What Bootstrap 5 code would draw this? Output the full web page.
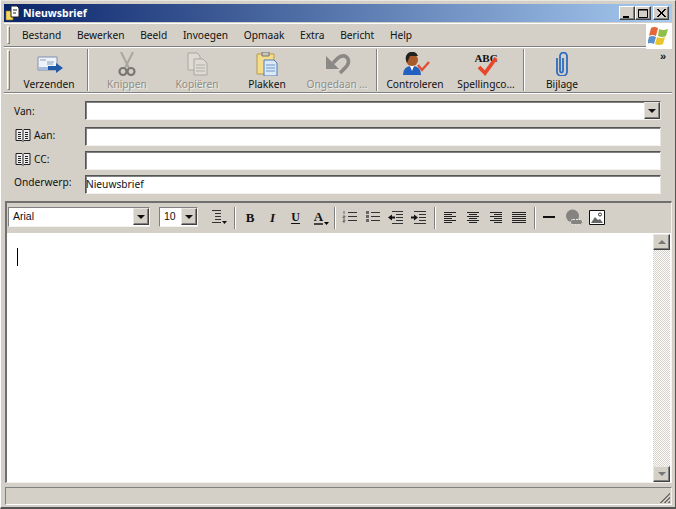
<!DOCTYPE html>
<html lang="nl"><head><meta charset="utf-8"><title>Nieuwsbrief</title>
<link href="https://cdn.jsdelivr.net/npm/bootstrap@5.3.0/dist/css/bootstrap.min.css" rel="stylesheet">
<style>
html,body{margin:0;height:509px;width:676px;overflow:hidden;background:#d4d0c8}
body,.win{font:10.2px/13px "Noto Sans","Liberation Sans",sans-serif;color:#111}
.win{width:676px;height:509px;background:#d4d0c8;border-top:1px solid #e8e6e0;border-left:1px solid #fff;border-right:1px solid #555;border-bottom:2px solid #555;padding:3px 3px 2px 3px}
.ttl{height:18px;flex:none;background:linear-gradient(90deg,#0a246a,#a6caf0);color:#fff;font:bold 10.5px/18px "Noto Sans",sans-serif;padding-left:1px}
.ttl-ico{margin-right:2px}
.wbtn{width:16px;height:14px;background:#d4d0c8;border:1px solid;border-color:#fff #404040 #404040 #fff;box-shadow:inset -1px -1px #808080}
.wbtn svg{display:block;margin:1px}
.wbtn.xb{margin-left:2px}
.ttl-r{margin-right:3px}
.mbar{height:24px;flex:none;border-top:1px solid #fff;margin-top:1px;border-bottom:1px solid #808080;position:relative}
.grip{width:3px;border:1px solid;border-color:#fff #808080 #808080 #fff;margin:2px 0 2px 3px;flex:none}
.grip-t{margin-right:4px}
.mitem{margin-right:15.7px}
.mlist{padding-left:12px}
.flag{width:26px;height:26px;background:#fff;margin-left:auto;margin-top:-1px;display:flex;align-items:center;justify-content:center;margin-bottom:-2px;position:relative}
.tbar{height:46px;flex:none;border-top:1px solid #fff;border-bottom:1px solid #808080;box-shadow:0 1px #fff;position:relative}
.tb{width:70px;flex:none;text-align:center;display:flex;flex-direction:column;align-items:center}
.tb-s{margin-left:1px}
.tb svg{height:24px;width:30px;margin-top:4px;display:block}
.tb span{margin-top:2px;white-space:nowrap;color:#111}
.tb.dis span{color:#8f8c86;text-shadow:1px 1px 0 #f0eee8}
.vsep{width:2px;flex:none;border-left:1px solid #808080;border-right:1px solid #fff;margin:1px 0}
.vs1{margin-left:3px;margin-right:3px}
.vs2{margin-left:4px;margin-right:2px}
.vs3{margin-left:2px;margin-right:2px}
.more{position:absolute;right:7px;top:2px;font:bold 11px/12px "Liberation Sans",sans-serif;letter-spacing:-1px}
.frm{flex:none;padding:8px 11px 0 10px;height:112px}
.frow{height:24px;display:flex;align-items:flex-start}
.frow-t{height:26px}
.flab{width:71px;flex:none;padding-top:1px;white-space:nowrap;display:flex;align-items:center}
.flab-t{padding-top:4px}
.flab svg{margin:0 3px 0 1px}
.inp{flex:1;height:19px;background:#fff;border:1px solid;border-color:#555 #e8e6e0 #f4f3ef #555;box-shadow:inset 1px 1px #808080;line-height:17px;padding-left:0;position:relative}
.arr{position:absolute;right:0;top:0;width:16px;height:17px;background:#d4d0c8;border:1px solid;border-color:#e8e6e0 #404040 #404040 #e8e6e0;box-shadow:inset -1px -1px #808080;display:flex;align-items:center;justify-content:center}
.tri{width:0;height:0;border:4px solid transparent;border-top:4px solid #111;border-bottom:0}
.edwrap{flex:1;min-height:0;margin:-4px 0 0 1px;border:1px solid;border-color:#707070 #f4f3ef #f4f3ef #707070;border-top-width:2px;border-left-width:2px;display:flex;flex-direction:column}
.ftb{height:30px;flex:none;padding:4px 0 0 1px;display:flex;align-items:flex-start}
.sel{height:20px;background:#fff;border:1px solid;border-color:#808080 #f4f3ef #f4f3ef #808080;position:relative;padding-left:4px;line-height:17px;flex:none;font-family:"Liberation Sans",sans-serif;font-size:10.5px}
.sel-a{width:142px}
.sel-b{width:39px;margin:0 9px}
.fi{width:23px;height:20px;flex:none;display:flex;align-items:center;justify-content:center;position:relative}
.fi svg{display:block}
.fi-b{width:22px;font:bold 13px/1 "Liberation Serif",serif}
.fi-i{font:italic bold 13px/1 "Liberation Serif",serif}
.fi-u{font:bold 12px/1 "Liberation Serif",serif;border-bottom:1px solid #111}
.fi-a{font:bold 13px/1 "Liberation Serif",serif;border-bottom:2px solid #444}
.fi-d{position:absolute;right:1px;bottom:2px}
.fi-h{margin-right:4px}
.fs{width:2px;height:22px;flex:none;border-left:1px solid #808080;border-right:1px solid #fff;margin:0 3px 0 4px}
.fs-n{margin-right:2px}
.edit{flex:1;min-height:0;background:#fff;display:flex;border-top:1px solid #fff}
.caret{width:1px;height:18px;background:#000;margin:14px 0 0 10px}
.sb{width:17px;margin-left:auto;margin-right:1px;display:flex;flex-direction:column;background-image:repeating-conic-gradient(#d4d0c8 0 25%,#fff 0 50%);background-size:2px 2px}
.sbtn{height:16px;flex:none;background:#d4d0c8;border:1px solid;border-color:#e8e6e0 #404040 #404040 #e8e6e0;box-shadow:inset -1px -1px #808080;display:flex;align-items:center;justify-content:center}
.tup{width:0;height:0;border:4px solid transparent;border-bottom:4px solid #777;border-top:0}
.tdn{width:0;height:0;border:4px solid transparent;border-top:4px solid #777;border-bottom:0}
.stat{height:18px;flex:none;margin:4px 0 0 1px;border:1px solid;border-color:#808080 #f4f3ef #fff #808080;position:relative}
.grp{position:absolute;right:0;bottom:0}
</style></head><body>
<svg width="0" height="0" class="position-absolute"><defs><symbol id="book" viewBox="0 0 16 14"><path d="M1 1.500h6l1 1 1-1h6v11H9l-1 1-1-1H1z" fill="#eee" stroke="#222"/><path d="M8 2.500v10M3 4.500h3M3 6.500h3M3 8.500h3M3 10.500h3M10 4.500h3M10 6.500h3M10 8.500h3M10 10.500h3" stroke="#222"/></symbol></defs></svg>
<div class="win d-flex flex-column">
 <div class="ttl d-flex align-items-center">
  <svg class="ttl-ico" width="16" height="16" viewBox="0 0 16 16"><path d="M1 6h7v9H1z" fill="#f6d75e" stroke="#8a7020" stroke-width=".6"/><path d="M6 1h6l2 2v9H6z" fill="#fff" stroke="#222"/><path d="M8 5h4M8 8h3" stroke="#222"/></svg>
  <span>Nieuwsbrief</span>
  <div class="ms-auto d-flex ttl-r">
   <div class="wbtn"><svg width="12" height="10"><path d="M2 8h6v2H2z" fill="#000"/></svg></div>
   <div class="wbtn"><svg width="12" height="10"><path d="M1.500 1.500h9v8h-9zM1 2h10" fill="none" stroke="#000"/></svg></div>
   <div class="wbtn xb"><svg width="12" height="10"><path d="M2 1l8 8M3 1l8 8M10 1l-8 8M11 1l-8 8" stroke="#000"/></svg></div>
  </div>
 </div>
 <div class="mbar d-flex">
  <div class="grip"></div>
  <div class="d-flex align-items-center mlist">
   <span class="mitem">Bestand</span><span class="mitem">Bewerken</span><span class="mitem">Beeld</span><span class="mitem">Invoegen</span><span class="mitem">Opmaak</span><span class="mitem">Extra</span><span class="mitem">Bericht</span><span class="mitem">Help</span>
  </div>
  <div class="flag"><svg width="22" height="22" viewBox="0 0 22 22"><path d="M3 3q3-2 7 0l-2 8q-4-2-7 0z" fill="#e2683a"/><path d="M11 4q4 2 9 0l-2 7q-4 2-8 0z" fill="#8fbf4a"/><path d="M1 12q3-2 7 0l-2 7q-4-2-7 0z" fill="#5a90cc"/><path d="M9 12q4 2 8 0l-2 7q-4 2-8 0z" fill="#eac42f"/></svg></div>
 </div>
 <div class="tbar d-flex">
  <div class="grip grip-t"></div>
  <div class="tb"><svg viewBox="0 0 30 24"><path d="M4 5h19v13H4z" fill="#eef3fa" stroke="#8090ac"/><path d="M5 15h17v3H5z" fill="#a5bcdc"/><path d="M6 8h6M13 10h7M13 12h6" stroke="#8a9cb8"/><path d="M14 14h8v-3l7 5-7 5v-3h-8z" fill="#1f5aa8"/></svg><span>Verzenden</span></div>
  <div class="vsep vs1"></div>
  <div class="tb dis"><svg viewBox="0 0 30 24"><path d="M9 0l8 16M21 0l-8 16" stroke="#a8a69f" stroke-width="2"/><circle cx="11" cy="19.500" r="3.500" fill="none" stroke="#7a7873" stroke-width="2.200"/><circle cx="19" cy="19.500" r="3.500" fill="none" stroke="#7a7873" stroke-width="2.200"/></svg><span>Knippen</span></div>
  <div class="tb dis"><svg viewBox="0 0 30 24"><path d="M6 1h9l3 3v14H6z" fill="#dedbd4" stroke="#aaa7a0"/><path d="M12 7h9l4 4v12H12z" fill="#dedbd4" stroke="#aaa7a0"/><path d="M14 13h9M14 16h9M14 19h9" stroke="#b0ada6"/></svg><span>Kopiëren</span></div>
  <div class="tb"><svg viewBox="0 0 30 24"><path d="M5 2h17v20H5z" fill="#f5dc8a" stroke="#b89a45"/><path d="M10 0h7v4h-7z" fill="#c9c7c0" stroke="#77756e"/><path d="M12 8h10l3 3v13H12z" fill="#dbe8f8" stroke="#4f7ab5"/><path d="M14 13h9M14 16h9M14 19h9" stroke="#6d95c8"/></svg><span>Plakken</span></div>
  <div class="tb dis"><svg viewBox="0 0 30 24"><path d="M11 11l5-5c3-3 8-3 10 1 2 5-2 8-8 14" fill="none" stroke="#8b8985" stroke-width="3.600"/><path d="M4 4v13h13z" fill="#8b8985"/></svg><span>Ongedaan ...</span></div>
  <div class="vsep vs2"></div>
  <div class="tb"><svg viewBox="0 0 30 24"><circle cx="12" cy="8" r="6" fill="#a85a2a"/><path d="M6 8a6 6 0 0 1 12-4l-8 0-3 7z" fill="#222"/><path d="M3 23q0-9 9-9t9 9z" fill="#2460c0"/><path d="M10 14h4l-2 5z" fill="#fff"/><path d="M18 13l4 5 7-8" fill="none" stroke="#e05030" stroke-width="2.400"/></svg><span>Controleren</span></div>
  <div class="tb tb-s"><svg viewBox="0 0 30 24"><text x="15" y="10" text-anchor="middle" font-family="Liberation Serif" font-weight="700" font-size="11" fill="#111">ABC</text><path d="M8 15l6 6L25 6" fill="none" stroke="#e8482a" stroke-width="3.800"/></svg><span>Spellingco...</span></div>
  <div class="vsep vs3"></div>
  <div class="tb"><svg viewBox="0 0 30 24"><path d="M10 6v14a5 4 0 0 0 10 0V4a3.500 3.500 0 0 0-7 0v15a1.500 1.500 0 0 0 3 0V6" fill="none" stroke="#2e6cc0" stroke-width="1.800"/></svg><span>Bijlage</span></div>
  <div class="more">»</div>
 </div>
 <div class="frm">
  <div class="frow frow-t"><div class="flab flab-t">Van:</div><div class="inp"><div class="arr"><i class="tri"></i></div></div></div>
  <div class="frow"><div class="flab"><svg width="16" height="14"><use href="#book"/></svg>Aan:</div><div class="inp"></div></div>
  <div class="frow"><div class="flab"><svg width="16" height="14"><use href="#book"/></svg>CC:</div><div class="inp"></div></div>
  <div class="frow"><div class="flab">Onderwerp:</div><div class="inp">Nieuwsbrief</div></div>
 </div>
 <div class="edwrap">
  <div class="ftb">
   <div class="sel sel-a">Arial<div class="arr"><i class="tri"></i></div></div>
   <div class="sel sel-b">10<div class="arr"><i class="tri"></i></div></div>
   <div class="fi"><svg width="18" height="16"><path d="M2 1.500h9M5 4.500h6M5 7.500h6M5 10.500h6M2 13.500h9" stroke="#333"/><path d="M12 12h5l-2.500 3z" fill="#111"/></svg></div>
   <div class="fs"></div>
   <div class="fi fi-b">B</div>
   <div class="fi fi-i">I</div>
   <div class="fi"><span class="fi-u">U</span></div>
   <div class="fi"><span class="fi-a">A</span><svg class="fi-d" width="5" height="3"><path d="M0 0h5L2.500 3z"/></svg></div>
   <div class="fs fs-n"></div>
   <div class="fi"><svg width="16" height="14"><path d="M6 2.500h9M6 6.500h9M6 10.500h9" stroke="#333"/><path d="M2 1v3M1 6h2v1H1v1h2M1 10h2v1H1v1h2" stroke="#666" fill="none"/></svg></div>
   <div class="fi"><svg width="16" height="14"><path d="M6 2.500h9M6 6.500h9M6 10.500h9" stroke="#333"/><path d="M1 1h3v3H1zM1 5h3v3H1zM1 9h3v3H1z" fill="#666"/></svg></div>
   <div class="fi"><svg width="17" height="15"><path d="M5 1.500h11M9 4.500h7M9 7.500h7M9 10.500h7M5 13.500h11" stroke="#333"/><path d="M1 7.500l4-3v2h3v2H5v2z" fill="#111"/></svg></div>
   <div class="fi"><svg width="17" height="15"><path d="M4 1.500h12M9 4.500h7M9 7.500h7M9 10.500h7M4 13.500h12" stroke="#333"/><path d="M8 7.500l-4-3v2H1v2h3v2z" fill="#111"/></svg></div>
   <div class="fs fs-n"></div>
   <div class="fi"><svg width="14" height="12"><path d="M1 1.500h12M1 3.500h8M1 5.500h12M1 7.500h8M1 9.500h12M1 11.500h8" stroke="#222"/></svg></div>
   <div class="fi"><svg width="14" height="12"><path d="M1 1.500h12M3 3.500h8M1 5.500h12M3 7.500h8M1 9.500h12M3 11.500h8" stroke="#222"/></svg></div>
   <div class="fi"><svg width="14" height="12"><path d="M1 1.500h12M5 3.500h8M1 5.500h12M5 7.500h8M1 9.500h12M5 11.500h8" stroke="#222"/></svg></div>
   <div class="fi"><svg width="16" height="12"><path d="M1 1.500h14M1 3.500h14M1 5.500h14M1 7.500h14M1 9.500h14M1 11.500h14" stroke="#222"/></svg></div>
   <div class="fs"></div>
   <div class="fi"><svg class="fi-h" width="14" height="4"><path d="M1 2h12" stroke="#111" stroke-width="2"/></svg></div>
   <div class="fi"><svg width="18" height="17"><circle cx="7.500" cy="7" r="6.500" fill="#85837f"/><path d="M8 10.500h7a2.500 2.500 0 0 1 0 5H8a2.500 2.500 0 0 1 0-5z" fill="#85837f" stroke="#eee" stroke-dasharray="2 1"/></svg></div>
   <div class="fi"><svg width="16" height="15"><path d="M.5.500h15v14H.500z" fill="#fff" stroke="#111"/><circle cx="11" cy="4.500" r="1.500" fill="none" stroke="#333"/><path d="M2 13l4-6 3 3 2-1 3 4z" fill="#666"/></svg></div>
  </div>
  <div class="edit">
   <div class="caret"></div>
   <div class="sb">
    <div class="sbtn"><i class="tup"></i></div>
    <div class="flex-grow-1"></div>
    <div class="sbtn"><i class="tdn"></i></div>
   </div>
  </div>
 </div>
 <div class="stat"><svg class="grp" width="13" height="13"><path d="M12 2L2 12M12 3L3 12M12 6L6 12M12 7L7 12M12 10L10 12M12 11L11 12" stroke="#707070"/></svg></div>
</div>
<script src="https://cdn.jsdelivr.net/npm/bootstrap@5.3.0/dist/js/bootstrap.bundle.min.js"></script>
</body></html>
